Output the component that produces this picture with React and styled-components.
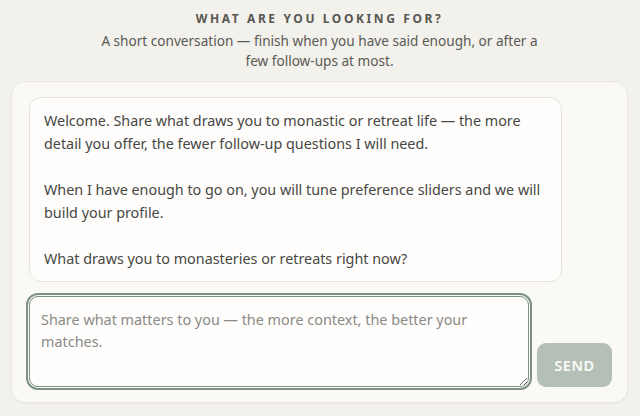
import React from "react";
import styled, { createGlobalStyle } from "styled-components";

const Global = createGlobalStyle`
  html, body { margin: 0; padding: 0; background: #f3f1eb; }
  body { font-family: "Noto Sans", "Open Sans", sans-serif; color: #4a4a48; }
  * { box-sizing: border-box; }
`;

const Page = styled.div`
  width: 640px;
  height: 416px;
  padding: 11px 12px 0 11px;
  display: flex;
  flex-direction: column;
`;

const Header = styled.header`
  display: flex;
  flex-direction: column;
  align-items: center;
  text-align: center;
  gap: 4px;
  margin-bottom: 10px;
`;

const Title = styled.h1`
  margin: 0;
  font-size: 12px;
  line-height: 16px;
  font-weight: 700;
  letter-spacing: 2.6px;
  text-transform: uppercase;
  color: #565652;
`;

const Subtitle = styled.p`
  margin: 0;
  max-width: 450px;
  font-size: 13.6px;
  line-height: 20px;
  color: #5a5a56;
`;

const Card = styled.section`
  background: #faf9f5;
  border: 1px solid #e9e7e0;
  border-radius: 14px;
  padding: 15px 15px 15px 17px;
  display: flex;
  flex-direction: column;
  gap: 12px;
  box-shadow: 0 1px 2px rgba(0, 0, 0, 0.03);
`;

const Bubble = styled.div`
  width: 533px;
  background: #fefdfb;
  border: 1px solid #e6e4dd;
  border-radius: 12px;
  padding: 11px 14px;
  font-size: 14.35px;
  line-height: 23px;
  color: #474744;
  white-space: pre-wrap;
`;

const InputRow = styled.div`
  display: flex;
  align-items: flex-end;
  gap: 8px;
`;

const TextArea = styled.textarea`
  flex: 1;
  height: 91px;
  margin: 2px 0 0 0;
  border: 1px solid #7b9183;
  outline: 2px solid #7b9183;
  outline-offset: 1px;
  border-radius: 9px;
  background: #fefdfb;
  padding: 12px 11px;
  font-family: "Noto Sans", "Open Sans", sans-serif;
  font-size: 14.4px;
  line-height: 22px;
  color: #474744;
  resize: vertical;
  &::placeholder { color: #8a8a86; }
`;

const SendButton = styled.button`
  width: 75px;
  height: 44px;
  border: none;
  border-radius: 9px;
  background: #b4c0b6;
  color: #fbfbf8;
  font-family: "Noto Sans", "Open Sans", sans-serif;
  font-size: 14.5px;
  font-weight: 600;
  letter-spacing: 0.6px;
  cursor: pointer;
`;

const welcome = `Welcome. Share what draws you to monastic or retreat life — the more detail you offer, the fewer follow-up questions I will need.

When I have enough to go on, you will tune preference sliders and we will build your profile.

What draws you to monasteries or retreats right now?`;

export default function App() {
  return (
    <>
      <Global />
      <Page>
        <Header>
          <Title>What are you looking for?</Title>
          <Subtitle>
            A short conversation — finish when you have said enough, or after a few follow-ups at most.
          </Subtitle>
        </Header>
        <Card>
          <Bubble>{welcome}</Bubble>
          <InputRow>
            <TextArea placeholder="Share what matters to you — the more context, the better your matches." />
            <SendButton type="button">SEND</SendButton>
          </InputRow>
        </Card>
      </Page>
    </>
  );
}
